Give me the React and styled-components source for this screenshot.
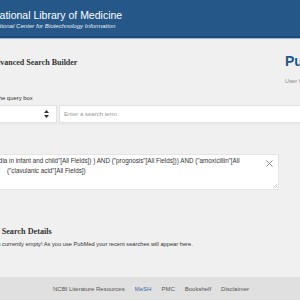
import React from 'react';
import styled, { createGlobalStyle } from 'styled-components';

const GlobalStyle = createGlobalStyle`
  html, body {
    margin: 0;
    padding: 0;
    background: #f0f0f0;
    overflow: hidden;
  }
  body {
    font-family: 'Liberation Sans', Arial, sans-serif;
  }
`;

const Page = styled.div`
  display: flex;
  flex-direction: column;
  width: 300px;
  height: 300px;
  overflow: hidden;
`;

// Header
const Header = styled.header`
  flex: none;
  height: 36px;
  background: #255789;
  border-bottom: 2px solid #22487a;
  box-shadow: 0 1px 0 #8fbadb;
  overflow: hidden;
`;

const Brand = styled.div`
  margin: 10px 0 0 -8px;
  color: #fff;
  white-space: nowrap;
`;

const BrandTitle = styled.div`
  font-size: 10.5px;
  line-height: 11px;
`;

const BrandSub = styled.div`
  margin-top: 1px;
  font-size: 6.1px;
  font-style: italic;
  line-height: 7px;
  opacity: 0.9;
`;

// Main content
const Main = styled.main`
  flex: 1;
  display: flex;
  flex-direction: column;
  width: 360px;
  margin-left: -35px;
`;

const TopRow = styled.div`
  display: flex;
  justify-content: space-between;
  align-items: flex-start;
  padding-top: 16px;
`;

const Heading = styled.h1`
  margin: 4px 0 0 25px;
  font-family: 'Liberation Serif', 'Times New Roman', serif;
  font-weight: 700;
  font-size: 8px;
  line-height: 10px;
  color: #333;
  white-space: nowrap;
`;

const Aside = styled.div`
  display: flex;
  flex-direction: column;
  width: 40px;
  white-space: nowrap;
`;

const Logo = styled.div`
  font-weight: 700;
  font-size: 14px;
  line-height: 14px;
  color: #245589;
`;

const Guide = styled.div`
  margin-top: 9px;
  font-size: 5.8px;
  line-height: 8px;
  color: #888;
`;

const Label = styled.div`
  margin: 9px 0 0 -3px;
  font-size: 5.9px;
  line-height: 8px;
  color: #333;
  white-space: nowrap;
`;

const FieldRow = styled.div`
  display: flex;
  gap: 2px;
  margin-top: 3px;
  height: 18px;
  box-shadow: 0 2px 2px rgba(0, 0, 0, 0.03);
`;

const Select = styled.div`
  flex: none;
  width: 92px;
  display: flex;
  align-items: center;
  justify-content: flex-end;
  padding-right: 7px;
  box-sizing: border-box;
  background: #fff;
  border: 1px solid #e2e2e2;
`;

const Input = styled.div`
  flex: 1;
  display: flex;
  align-items: center;
  padding-left: 4px;
  background: #fff;
  border: 1px solid #e2e2e2;
  font-size: 6px;
  color: #999;
`;

const QueryBox = styled.div`
  position: relative;
  margin-top: 31px;
  width: 314px;
  height: 36px;
  box-sizing: border-box;
  padding: 1px 20px 0 3px;
  background: #fff;
  border: 1px solid #e4e4e4;
  font-size: 6.3px;
  line-height: 10px;
  color: #333;
  overflow: hidden;
`;

const QueryLine = styled.div`
  white-space: nowrap;
  margin-left: ${({ $shift }) => $shift || 0}px;
`;

const Clear = styled.span`
  position: absolute;
  top: 5px;
  right: 5px;
  display: flex;
`;

const Grip = styled.span`
  position: absolute;
  right: 1px;
  bottom: 1px;
  display: flex;
`;

const SectionTitle = styled.h2`
  margin: 37px 0 0 -7px;
  font-family: 'Liberation Serif', 'Times New Roman', serif;
  font-weight: 700;
  font-size: 8.2px;
  line-height: 10px;
  color: #333;
  white-space: nowrap;
`;

const Note = styled.p`
  margin: 3px 0 0;
  font-size: 5.7px;
  line-height: 8px;
  color: #333;
  white-space: nowrap;
`;

// Footer
const Footer = styled.footer`
  flex: none;
  display: flex;
  align-items: center;
  gap: 10px;
  height: 23px;
  padding-left: 53px;
  background: #e0e0e0;
  font-size: 6px;
  color: #444;
  white-space: nowrap;
`;

const FooterLink = styled.a`
  color: ${({ $accent }) => ($accent ? '#3869a8' : '#555')};
  text-decoration: none;
`;

const SortArrows = () => (
  <svg width="5" height="8" viewBox="0 0 5 8">
    <path d="M2.5 0 L5 3 H0 Z M2.5 8 L0 5 H5 Z" fill="#333" />
  </svg>
);

const Cross = () => (
  <svg width="7" height="7" viewBox="0 0 7 7">
    <path d="M0.5 0.5 L6.5 6.5 M6.5 0.5 L0.5 6.5" stroke="#777" strokeWidth="0.8" />
  </svg>
);

const ResizeGrip = () => (
  <svg width="4" height="4" viewBox="0 0 4 4">
    <path d="M4 0 L0 4 M4 2 L2 4" stroke="#aaa" strokeWidth="0.6" />
  </svg>
);

const App = () => (
  <Page>
    <GlobalStyle />
    <Header>
      <Brand>
        <BrandTitle>National Library of Medicine</BrandTitle>
        <BrandSub>National Center for Biotechnology Information</BrandSub>
      </Brand>
    </Header>
    <Main>
      <TopRow>
        <Heading>Advanced Search Builder</Heading>
        <Aside>
          <Logo>PubMed</Logo>
          <Guide>User Guide</Guide>
        </Aside>
      </TopRow>
      <Label>Add terms to the query box</Label>
      <FieldRow>
        <Select>
          <SortArrows />
        </Select>
        <Input>Enter a search term</Input>
      </FieldRow>
      <QueryBox>
        <QueryLine>
          (("otitis media in infant and child"[All Fields]) ) AND ("prognosis"[All Fields])) AND ("amoxicillin"[All
        </QueryLine>
        <QueryLine $shift={38}>("clavulanic acid"[All Fields])</QueryLine>
        <Clear>
          <Cross />
        </Clear>
        <Grip>
          <ResizeGrip />
        </Grip>
      </QueryBox>
      <SectionTitle>History and Search Details</SectionTitle>
      <Note>Your history is currently empty! As you use PubMed your recent searches will appear here.</Note>
    </Main>
    <Footer>
      <FooterLink>NCBI Literature Resources</FooterLink>
      <FooterLink $accent>MeSH</FooterLink>
      <FooterLink>PMC</FooterLink>
      <FooterLink>Bookshelf</FooterLink>
      <FooterLink>Disclaimer</FooterLink>
    </Footer>
  </Page>
);

export default App;
